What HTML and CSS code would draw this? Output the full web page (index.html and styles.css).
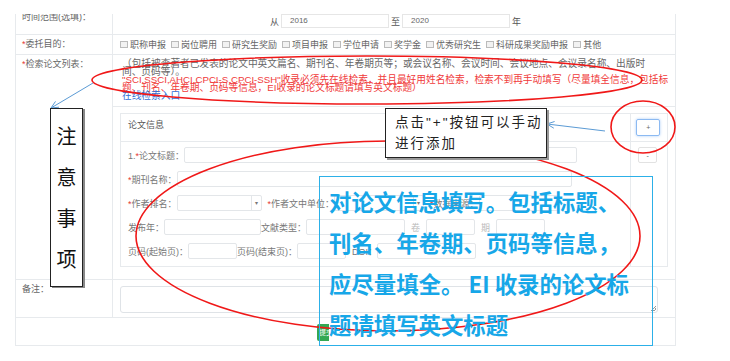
FILE: index.html
```html
<!DOCTYPE html>
<html lang="zh-CN">
<head>
    <meta charset="UTF-8">
    <meta name="viewport" content="width=device-width, initial-scale=1.0">
    <title>检索论文列表</title>
    <link rel="stylesheet" href="styles.css">
</head>
<body>
<div class="page">
    <div class="sheet">
        <div class="row row-time">
            <div class="label">时间范围(选填)：</div>
            <div class="cell range">
                <span>从</span>
                <span class="field">2016</span>
                <span>至</span>
                <span class="field">2020</span>
                <span>年</span>
            </div>
        </div>

        <div class="row row-purpose">
            <div class="label"><i>*</i>委托目的：</div>
            <div class="cell checks">
                <label class="check"><span class="box"></span>职称申报</label>
                <label class="check"><span class="box"></span>岗位聘用</label>
                <label class="check"><span class="box"></span>研究生奖励</label>
                <label class="check"><span class="box"></span>项目申报</label>
                <label class="check"><span class="box"></span>学位申请</label>
                <label class="check"><span class="box"></span>奖学金</label>
                <label class="check"><span class="box"></span>优秀研究生</label>
                <label class="check"><span class="box"></span>科研成果奖励申报</label>
                <label class="check"><span class="box"></span>其他</label>
            </div>
        </div>

        <div class="row row-list">
            <div class="label"><i>*</i>检索论文列表：</div>
            <div class="cell list">
                <p class="hint"><span class="ln">（包括被查著者已发表的论文中英文篇名、期刊名、年卷期页等；或会议名称、会议时间、会议地点、会议录名称、出版时</span><span class="ln">间、页码等）。</span></p>
                <p class="hint red"><span class="ln">"SCI,SSCI,AHCI,CPCI-S,CPCI-SSH"收录必须先在线检索，并且最好用姓名检索，检索不到再手动填写（尽量填全信息，包括标</span><span class="ln">题、刊名、年卷期、页码等信息，EI收录的论文标题请填写英文标题）</span></p>
                <a class="hint link" href="#">在线检索入口</a>
                <div class="sep"></div>

                <div class="panel">
                    <div class="panel-title">论文信息</div>
                    <div class="panel-side top"><span class="btn add">+</span></div>
                    <div class="panel-body">
                        <div class="frow">
                            <span>1.<i>*</i>论文标题：</span>
                            <span class="in w-title"></span>
                        </div>
                        <div class="frow">
                            <span><i>*</i>期刊名称：</span>
                            <span class="in w-journal"></span>
                        </div>
                        <div class="frow">
                            <span><i>*</i>作者排名：</span>
                            <span class="in sel w-rank"><b>▾</b></span>
                            <span class="gap"><i>*</i>作者文中单位：</span>
                            <span class="in sel w-unit"><b>▾</b></span>
                            <span class="gap"><i>*</i>数据来源：</span>
                            <span class="in w-src"></span>
                        </div>
                        <div class="frow">
                            <span>发布年：</span>
                            <span class="in w-year"></span>
                            <span>文献类型：</span>
                            <span class="in w-type"></span>
                            <span class="mid">卷</span>
                            <span class="in w-small"></span>
                            <span class="mid">期</span>
                            <span class="in w-small"></span>
                        </div>
                        <div class="frow">
                            <span>页码(起始页)：</span>
                            <span class="in w-small"></span>
                            <span>页码(结束页)：</span>
                            <span class="in w-small"></span>
                            <span class="gap">DOI：</span>
                            <span class="in w-type"></span>
                        </div>
                    </div>
                    <div class="panel-side"><span class="btn del">-</span></div>
                </div>
            </div>
        </div>

        <div class="row row-note">
            <div class="label">备注：</div>
            <div class="cell note-cell"><div class="textarea"></div></div>
        </div>

        <div class="row-submit">
            <span class="btn-submit">提交</span>
        </div>
    </div>

    <svg class="marks" width="730" height="361" viewBox="0 0 730 361">
        <ellipse cx="367" cy="80" rx="275" ry="24" fill="none" stroke="#f01818" stroke-width="1.6"/>
        <ellipse cx="388" cy="236" rx="252" ry="95" fill="none" stroke="#f01818" stroke-width="1.6"/>
        <ellipse cx="643" cy="127" rx="32" ry="26" fill="none" stroke="#f01818" stroke-width="1.6"/>
        <path d="M93 83 L51 108 M59 107.2 L51 108 L55.5 101.4" fill="none" stroke="#5b9bd5" stroke-width="1"/>
        <path d="M605 131 L547 124 M553.8 128.2 L547 124 L554.6 121.5" fill="none" stroke="#5b9bd5" stroke-width="1"/>
    </svg>

    <div class="callout-v">
        <span>注</span><span>意</span><span>事</span><span>项</span>
    </div>

    <div class="callout-add">点击"+"按钮可以手动<br>进行添加</div>

    <div class="callout-blue">
        <span>对论文信息填写。包括标题、</span>
        <span>刊名、年卷期、页码等信息，</span>
        <span>应尽量填全。 EI 收录的论文标</span>
        <span>题请填写英文标题</span>
    </div>
</div>
</body>
</html>
```

FILE: styles.css
```css
body {
    margin: 0;
    font-family: "Liberation Sans", "Noto Sans CJK SC", sans-serif;
    background: #fff;
}
.page {
    position: relative;
    width: 730px;
    height: 361px;
    overflow: hidden;
}
i {
    font-style: normal;
    color: #e53935;
}

/* form sheet */
.sheet {
    margin: 14px 0 0 15px;
    width: 661px;
    height: 332px;
    border: 1px solid #e7eaed;
    border-top: none;
    box-sizing: border-box;
    overflow: hidden;
}
.row {
    display: grid;
    grid-template-columns: 97px 1fr;
    border-bottom: 1px solid #e7eaed;
    box-sizing: border-box;
}
.label {
    border-right: 1px solid #e7eaed;
    padding: 5px 0 0 6px;
    font-size: 9px;
    line-height: 9px;
    color: #666;
}
.row-time {
    height: 27px;
    margin-top: -6px;
}
.row-purpose {
    height: 20px;
}
.row-list {
    height: 225px;
}
.row-note {
    height: 38px;
}

.range {
    display: flex;
    align-items: center;
    gap: 2px;
    padding-left: 157px;
    font-size: 9px;
    color: #555;
}
.field {
    width: 108px;
    height: 14px;
    border: 1px solid #e6e6e6;
    box-sizing: border-box;
    padding-left: 8px;
    font-size: 8px;
    line-height: 12px;
    color: #666;
}

.checks {
    display: flex;
    align-items: center;
    gap: 5px;
    padding-left: 7px;
}
.check {
    display: flex;
    align-items: center;
    gap: 2px;
    font-size: 9px;
    color: #666;
}
.box {
    width: 6px;
    height: 5px;
    border: 1px solid #bbb;
    background: #f2f2f2;
}

.list {
    padding: 5px 8px 0 7px;
}
.hint {
    margin: 0 0 0 2px;
    font-size: 9.7px;
    line-height: 8px;
    color: #666;
}
.hint .ln {
    display: block;
    white-space: nowrap;
}
.hint.red {
    color: #f03a3a;
}
.hint.link {
    display: block;
    color: #2f6fd8;
    text-decoration: none;
}
.sep {
    border-top: 1px solid #e7eaed;
    margin: 6px -8px 0 -7px;
}

/* paper panel */
.panel {
    display: grid;
    grid-template-columns: 1fr 37px;
    grid-template-rows: 28px 1fr;
    margin-top: 6px;
    height: 154px;
    border: 1px solid #e7eaed;
    box-sizing: border-box;
}
.panel-title {
    border-bottom: 1px solid #e7eaed;
    padding: 4px 0 0 7px;
    font-size: 9px;
    color: #555;
}
.panel-side {
    border-left: 1px solid #e7eaed;
}
.panel-side.top {
    border-bottom: 1px solid #e7eaed;
}
.btn {
    display: flex;
    align-items: center;
    justify-content: center;
    box-sizing: border-box;
    border-radius: 2px;
    font-size: 7px;
    color: #666;
}
.btn.add {
    width: 24px;
    height: 17px;
    margin: 5px 0 0 5px;
    border: 1px solid #8cbaf2;
    box-shadow: 0 0 3px #a9cbf7;
}
.btn.del {
    width: 19px;
    height: 16px;
    margin: 5px 0 0 7px;
    border: 1px solid #e2e2e2;
}
.panel-body {
    display: flex;
    flex-direction: column;
    gap: 8px;
    padding: 5px 0 0 7px;
}
.frow {
    display: flex;
    align-items: center;
    height: 16px;
    font-size: 9px;
    color: #777;
    white-space: nowrap;
}
.in {
    display: flex;
    justify-content: flex-end;
    align-items: center;
    height: 16px;
    border: 1px solid #e3e6e9;
    border-radius: 2px;
    box-sizing: border-box;
    background: #fff;
}
.in.sel b {
    width: 9px;
    height: 100%;
    border-left: 1px solid #e3e6e9;
    font-size: 6px;
    font-weight: normal;
    line-height: 14px;
    text-align: center;
    color: #777;
}
.gap {
    margin-left: 6px;
}
.mid {
    margin: 0 6px;
    color: #bbb;
}
.w-title { width: 393px; }
.w-journal { width: 395px; }
.w-rank { width: 85px; }
.w-unit { width: 90px; }
.w-src { width: 80px; }
.w-year { width: 97px; }
.w-type { width: 99px; }
.w-small { width: 49px; }

.note-cell {
    padding: 6px 17px 0 7px;
}
.textarea {
    position: relative;
    height: 27px;
    border: 1px solid #dfe3e7;
    border-radius: 3px;
    box-sizing: border-box;
}
.textarea::after {
    content: "";
    position: absolute;
    right: 1px;
    bottom: 1px;
    width: 5px;
    height: 5px;
    background: linear-gradient(135deg, transparent 45%, #999 45%, #999 55%, transparent 55%, transparent 70%, #999 70%, #999 80%, transparent 80%);
}

.row-submit {
    height: 27px;
    padding: 6px 0 0 301px;
    box-sizing: border-box;
}
.btn-submit {
    display: block;
    width: 12px;
    height: 17px;
    overflow: hidden;
    background: #34a853;
    border-radius: 2px 0 0 2px;
    color: #fff;
    font-size: 7px;
    line-height: 17px;
    padding-left: 2px;
    box-sizing: border-box;
    white-space: nowrap;
}

/* annotations laid over the screenshot */
.marks {
    position: absolute;
    left: 0;
    top: 0;
    z-index: 1;
}
.callout-v {
    position: absolute;
    left: 50px;
    top: 108px;
    z-index: 2;
    width: 33px;
    height: 179px;
    box-sizing: border-box;
    padding-top: 8px;
    border: 1px solid #222;
    box-shadow: 2px 1px 0 #888;
    background: #fff;
    display: flex;
    flex-direction: column;
    align-items: center;
    font-size: 20px;
    line-height: 41px;
    color: #111;
}
.callout-add {
    position: absolute;
    left: 385px;
    top: 108px;
    z-index: 2;
    width: 162px;
    height: 50px;
    box-sizing: border-box;
    padding: 3px 0 0 9px;
    border: 1px solid #222;
    box-shadow: 2px 2px 0 #999;
    background: #fff;
    font-size: 13.5px;
    line-height: 21px;
    letter-spacing: 2px;
    color: #222;
    white-space: nowrap;
}
.callout-blue {
    position: absolute;
    left: 319px;
    top: 176px;
    z-index: 3;
    width: 334px;
    height: 170px;
    box-sizing: border-box;
    padding: 4px 0 0 9px;
    border: 1.5px solid #2cb0e8;
    font-family: "Noto Sans CJK SC", sans-serif;
    font-size: 22.4px;
    font-weight: 700;
    line-height: 41px;
    color: #17a7e8;
    white-space: nowrap;
}
.callout-blue span {
    display: block;
}
```
